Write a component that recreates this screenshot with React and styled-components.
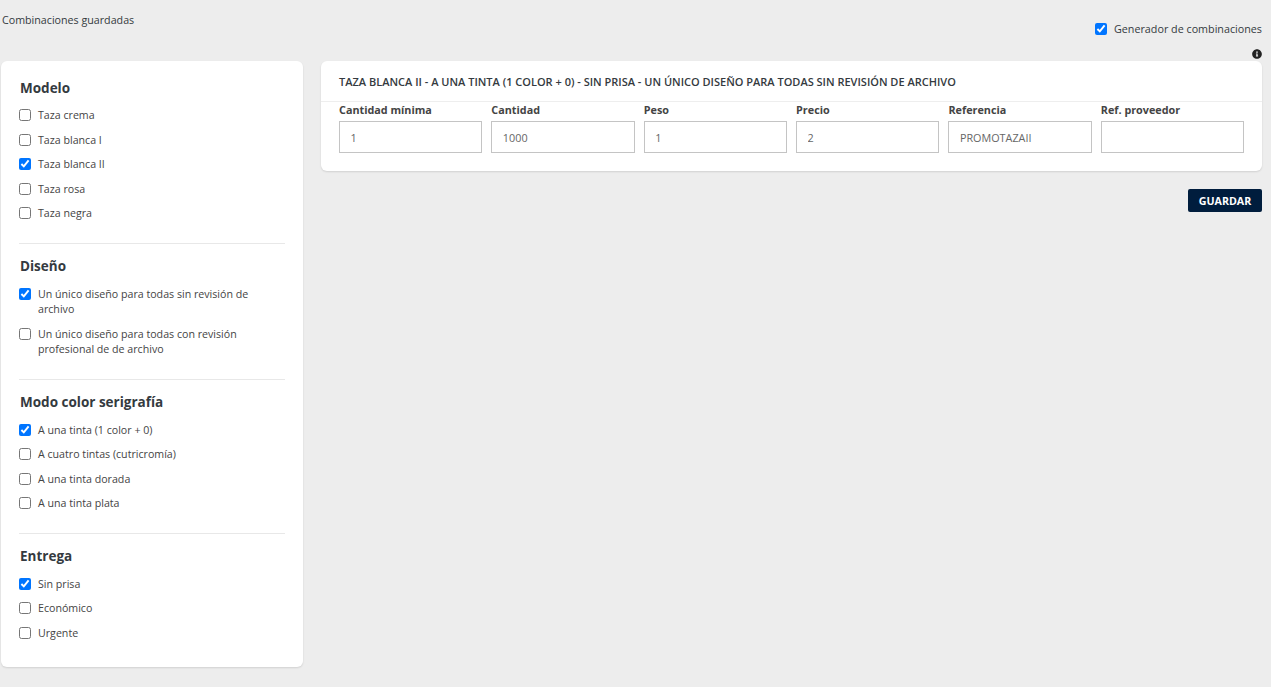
import React from "react";
import styled, { createGlobalStyle } from "styled-components";

const GlobalStyle = createGlobalStyle`
  html, body {
    margin: 0;
    padding: 0;
    background: #ededed;
    font-family: "Open Sans", "Liberation Sans", sans-serif;
    color: #343a40;
  }
  * { box-sizing: border-box; }
`;

const filters = [
  {
    title: "Modelo",
    options: [
      { label: "Taza crema" },
      { label: "Taza blanca I" },
      { label: "Taza blanca II", checked: true },
      { label: "Taza rosa" },
      { label: "Taza negra" },
    ],
  },
  {
    title: "Diseño",
    options: [
      { label: "Un único diseño para todas sin revisión de archivo", checked: true },
      { label: "Un único diseño para todas con revisión profesional de de archivo" },
    ],
  },
  {
    title: "Modo color serigrafía",
    options: [
      { label: "A una tinta (1 color + 0)", checked: true },
      { label: "A cuatro tintas (cutricromía)" },
      { label: "A una tinta dorada" },
      { label: "A una tinta plata" },
    ],
  },
  {
    title: "Entrega",
    options: [
      { label: "Sin prisa", checked: true },
      { label: "Económico" },
      { label: "Urgente" },
    ],
  },
];

const fields = [
  { label: "Cantidad mínima", value: "1" },
  { label: "Cantidad", value: "1000" },
  { label: "Peso", value: "1" },
  { label: "Precio", value: "2" },
  { label: "Referencia", value: "PROMOTAZAII" },
  { label: "Ref. proveedor", value: "" },
];

export default function App() {
  return (
    <Page>
      <GlobalStyle />
      <TopBar>
        <SavedLink>Combinaciones guardadas</SavedLink>
        <GeneratorToggle>
          <Check type="checkbox" defaultChecked />
          Generador de combinaciones
        </GeneratorToggle>
      </TopBar>
      <Columns>
        <Sidebar>
          {filters.map((group) => (
            <FilterGroup key={group.title}>
              <GroupTitle>{group.title}</GroupTitle>
              {group.options.map((option) => (
                <Option key={option.label}>
                  <Check type="checkbox" defaultChecked={option.checked} />
                  <span>{option.label}</span>
                </Option>
              ))}
            </FilterGroup>
          ))}
        </Sidebar>
        <Main>
          <InfoIcon viewBox="0 0 512 512">
            <path d="M256 8C119 8 8 119 8 256s111 248 248 248 248-111 248-248S393 8 256 8zm0 110c23 0 42 19 42 42s-19 42-42 42-42-19-42-42 19-42 42-42zm56 254c0 7-5 12-12 12h-88c-7 0-12-5-12-12v-24c0-7 5-12 12-12h12v-64h-12c-7 0-12-5-12-12v-24c0-7 5-12 12-12h64c7 0 12 5 12 12v100h12c7 0 12 5 12 12v24z" />
          </InfoIcon>
          <Card>
            <CardTitle>
              TAZA BLANCA II - A UNA TINTA (1 COLOR + 0) - SIN PRISA - UN ÚNICO DISEÑO PARA TODAS SIN REVISIÓN DE ARCHIVO
            </CardTitle>
            <FieldRow>
              {fields.map((field) => (
                <Field key={field.label}>
                  <FieldLabel>{field.label}</FieldLabel>
                  <FieldInput defaultValue={field.value} />
                </Field>
              ))}
            </FieldRow>
          </Card>
          <Actions>
            <SaveButton>GUARDAR</SaveButton>
          </Actions>
        </Main>
      </Columns>
    </Page>
  );
}

const Page = styled.div`
  width: 1271px;
  height: 687px;
  overflow: hidden;
  padding: 0 9px 0 1px;
`;

const TopBar = styled.div`
  display: flex;
  justify-content: space-between;
  align-items: flex-start;
  height: 61px;
  padding-top: 12px;
`;

const SavedLink = styled.div`
  font-size: 10.7px;
  line-height: 16px;
  margin-left: 1px;
`;

const GeneratorToggle = styled.label`
  display: flex;
  align-items: center;
  gap: 7px;
  font-size: 10.75px;
  line-height: 16px;
  margin-top: 9px;
`;

const Check = styled.input`
  width: 12px;
  height: 12px;
  margin: 0;
  flex: none;
  accent-color: #0075ff;
`;

const Columns = styled.div`
  display: flex;
  align-items: flex-start;
  gap: 18px;
`;

const Sidebar = styled.aside`
  width: 302px;
  height: 606px;
  padding: 18.6px 18px 0 18px;
  background: #fff;
  border-radius: 6px;
  box-shadow: 0 1px 2px rgba(0, 0, 0, 0.12);
`;

const FilterGroup = styled.section`
  padding-bottom: 16.2px;
  margin-bottom: 14px;
  border-bottom: 1px solid #e8e8e8;
  &:last-child {
    border-bottom: 0;
  }
`;

const GroupTitle = styled.h3`
  margin: 0 0 8.8px;
  padding-left: 1px;
  font-size: 13.5px;
  line-height: 16px;
  font-weight: 700;
  color: #343a40;
`;

const Option = styled.label`
  display: flex;
  align-items: flex-start;
  gap: 7px;
  padding: 4px 0 5px;
  font-size: 10.65px;
  line-height: 15.5px;
  color: #444;
  ${Check} {
    margin-top: 1px;
  }
`;

const Main = styled.main`
  position: relative;
  flex: 1;
`;

const InfoIcon = styled.svg`
  position: absolute;
  top: -12px;
  right: 0;
  width: 10px;
  height: 10px;
  fill: #222;
`;

const Card = styled.div`
  background: #fff;
  border-radius: 6px;
  box-shadow: 0 1px 2px rgba(0, 0, 0, 0.12);
  height: 110px;
`;

const CardTitle = styled.div`
  height: 41px;
  padding: 13px 18px 0;
  font-size: 11px;
  line-height: 16px;
  font-weight: 600;
  color: #343a40;
  border-bottom: 1px solid #eee;
`;

const FieldRow = styled.div`
  display: grid;
  grid-template-columns: repeat(6, 1fr);
  gap: 9.2px;
  padding: 0 18px;
`;

const Field = styled.div`
  display: flex;
  flex-direction: column;
`;

const FieldLabel = styled.label`
  font-size: 10.8px;
  line-height: 16px;
  margin-bottom: 3px;
  font-weight: 700;
  color: #444;
`;

const FieldInput = styled.input`
  width: 100%;
  height: 32px;
  padding: 0 10.5px;
  border: 1px solid #c4c4c4;
  border-radius: 0;
  outline: none;
  background: #fff;
  font-family: inherit;
  font-size: 10.8px;
  color: #666;
`;

const Actions = styled.div`
  display: flex;
  justify-content: flex-end;
  margin-top: 18px;
`;

const SaveButton = styled.button`
  width: 74px;
  height: 23px;
  padding: 0;
  border: 0;
  border-radius: 2px;
  background: #001d3d;
  color: #fff;
  font-family: inherit;
  font-size: 10.7px;
  font-weight: 700;
`;
